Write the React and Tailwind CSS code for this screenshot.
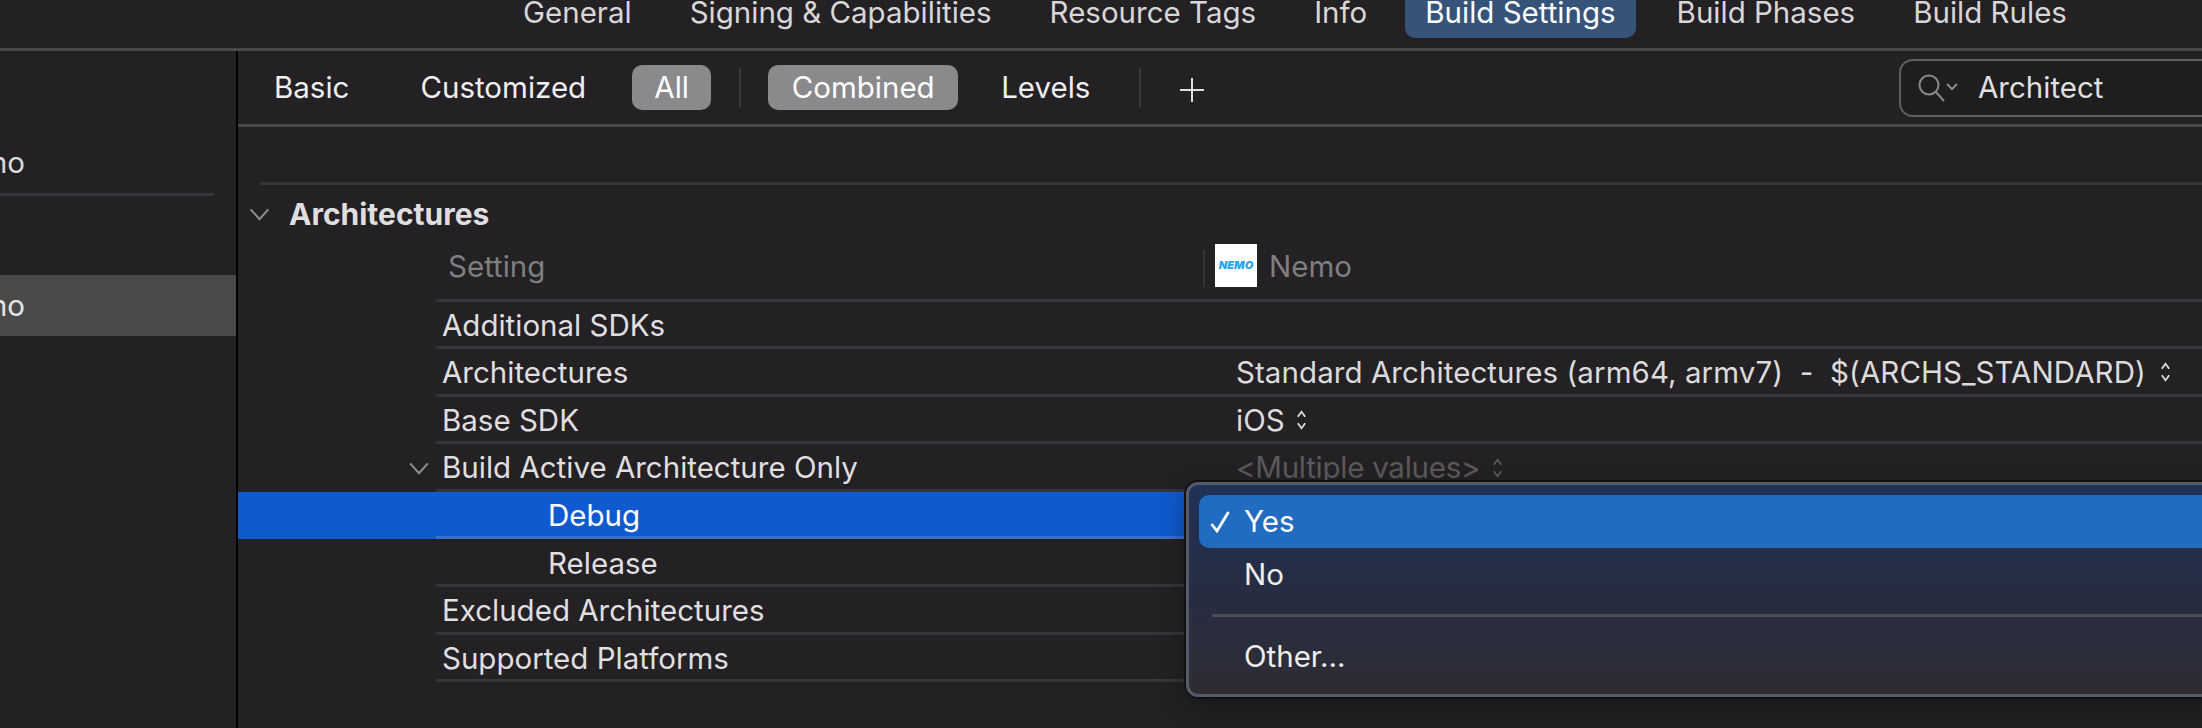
const font = { fontFamily: "Inter, 'Liberation Sans', sans-serif" };

function Chevron({ className }) {
  return (
    <svg viewBox="0 0 22 14" className={className} fill="none" stroke="currentColor" strokeWidth="2.2">
      <path d="M1.5 1.5 L11 12 L20.5 1.5" />
    </svg>
  );
}

function UpDown({ className }) {
  return (
    <svg viewBox="0 0 12 24" className={className} fill="none" stroke="currentColor" strokeWidth="2">
      <path d="M2 8.5 L6 3 L10 8.5" />
      <path d="M2 15.5 L6 21 L10 15.5" />
    </svg>
  );
}

function Row({ label, nested, chevron, selected, children }) {
  return (
    <div className={`flex h-[47.6px] ${selected ? "bg-[#0f5acf]" : ""}`}>
      <div className="flex w-[198px] items-center justify-end pr-[6px] pt-[1px]">
        {chevron && <Chevron className="h-[13px] w-[22px] text-[#8d8c8e]" />}
      </div>
      <div className={`flex flex-1 items-center border-b-[3px] pt-[2px] ${selected ? "border-[#3a6fd0]" : "border-[#38353a]"}`}>
        <div className={`w-[800px] ${nested ? "pl-[112px]" : "pl-[6px]"} ${selected ? "text-white" : "text-[#e0dfe0]"}`}>
          {label}
        </div>
        {children}
      </div>
    </div>
  );
}

function Value({ text, dim, gap }) {
  return (
    <div className={`flex items-center ${gap} ${dim ? "text-[#5c5a5d] tracking-[-0.25px]" : "text-[#dcdbdc] tracking-[0.07px]"}`}>
      <span className="whitespace-pre">{text}</span>
      <UpDown className="h-[22px] w-[11px]" />
    </div>
  );
}

function TopTab({ children, active }) {
  return (
    <div className={`flex h-[38px] items-center rounded-b-[10px] px-[20px] ${active ? "bg-[#36537a] text-white" : "text-[#d8d7d8]"}`}>
      <span className="-mt-[12px] leading-none">{children}</span>
    </div>
  );
}

export default function App() {
  return (
    <div style={font} className="relative flex h-[728px] w-[2202px] flex-col overflow-hidden bg-[#242125] text-[29.5px]">
      {/* project tabs */}
      <div className="flex h-[51px] shrink-0 gap-[18px] whitespace-nowrap border-b-[3px] border-[#4a484a] pl-[503px]">
        <TopTab>General</TopTab>
        <TopTab>Signing &amp; Capabilities</TopTab>
        <TopTab>Resource Tags</TopTab>
        <TopTab>Info</TopTab>
        <TopTab active>Build Settings</TopTab>
        <div className="ml-[3px]">
          <TopTab>Build Phases</TopTab>
        </div>
        <TopTab>Build Rules</TopTab>
      </div>

      <div className="flex flex-1">
        {/* targets sidebar */}
        <div className="w-[238px] shrink-0 overflow-hidden border-r-2 border-black pt-[86px]">
          <div className="-ml-[58px] flex h-[50px] items-center text-[#dcdbdc]">Nemo</div>
          <div className="mt-[6px] h-[3px] w-[214px] bg-[#38353a]" />
          <div className="mt-[79px] flex h-[61px] items-center bg-[#4a4a4a] text-[#e6e5e6]">
            <span className="-ml-[58px]">Nemo</span>
          </div>
        </div>

        <div className="flex min-w-0 flex-1 flex-col">
          {/* filter bar */}
          <div className="flex h-[76px] shrink-0 items-center border-b-[3px] border-[#4a484a] whitespace-nowrap text-[#f0eff0]">
            <span className="ml-[36px]">Basic</span>
            <span className="ml-[71px]">Customized</span>
            <span className="ml-[46px] flex h-[45px] w-[79px] items-center justify-center rounded-[10px] bg-[#8a898c] text-white">All</span>
            <span className="ml-[28px] h-[39px] w-[2px] bg-[#3a383b]" />
            <span className="ml-[27px] flex h-[45px] w-[190px] items-center justify-center rounded-[10px] bg-[#8a898c] text-white">Combined</span>
            <span className="ml-[43px]">Levels</span>
            <span className="ml-[49px] h-[39px] w-[2px] bg-[#3a383b]" />
            <svg viewBox="0 0 26 26" className="ml-[38px] mt-[4px] h-[26px] w-[26px]" stroke="#e0dfe0" strokeWidth="2">
              <path d="M13 1V25M1 13H25" />
            </svg>
            <div className="ml-auto -mr-[20px] flex h-[58px] w-[323px] items-center rounded-l-[14px] border-2 border-[#5f5e60] bg-[#1e1e1e] pl-[17px] text-[#e0dfe0]">
              <svg viewBox="0 0 42 28" className="h-[28px] w-[42px] text-[#8a898c]" fill="none" stroke="currentColor" strokeWidth="2">
                <circle cx="11" cy="11" r="9.5" />
                <path d="M18 18L26 27" />
                <path d="M29 10L34 15L39 10" />
              </svg>
              <span className="ml-[18px]">Architect</span>
            </div>
          </div>

          <div className="ml-[22px] mt-[55px] h-[3px] bg-[#38353a]" />

          {/* section */}
          <div className="flex h-[56px] items-center pl-[11px] pt-[2px]">
            <Chevron className="h-[13px] w-[21px] text-[#8d8c8e]" />
            <span className="ml-[19px] text-[30px] font-bold text-[#e0dfe0]">Architectures</span>
          </div>
          <div className="flex h-[60.5px]">
            <div className="w-[198px]" />
            <div className="flex flex-1 items-center border-b-[3px] border-[#38353a] pb-[8px] text-[#7f7e80]">
              <span className="w-[767px] pl-[12px]">Setting</span>
              <span className="mt-[6px] h-[37px] w-[2px] bg-[#38353a]" />
              <div className="ml-[10px] flex h-[43px] w-[42px] items-center justify-center bg-white">
                <span className="text-[11px] font-black italic leading-none text-[#2aa5f0]">NEMO</span>
              </div>
              <span className="ml-[12px]">Nemo</span>
            </div>
          </div>

          <Row label="Additional SDKs" />
          <Row label="Architectures">
            <Value text="Standard Architectures (arm64, armv7)  -  $(ARCHS_STANDARD)" gap="gap-[14px]" />
          </Row>
          <Row label="Base SDK">
            <Value text="iOS" gap="gap-[11px]" />
          </Row>
          <Row label="Build Active Architecture Only" chevron>
            <Value text="<Multiple values>" dim gap="gap-[12px]" />
          </Row>
          <Row label="Debug" nested selected />
          <Row label="Release" nested />
          <Row label="Excluded Architectures" />
          <Row label="Supported Platforms" />
        </div>
      </div>

      {/* popup menu */}
      <div className="absolute left-[1186px] top-[482px] h-[215px] w-[1030px] rounded-[12px] border-[3px] border-[#555a6a] bg-gradient-to-b from-[#1f3157] via-[#262d42] to-[#2d2c34] pl-[10px] pt-[10px] text-[#eeeeee] shadow-[0_0_0_2px_#111,0_8px_28px_rgba(0,0,0,0.4)]">
        <div className="flex h-[53px] items-center rounded-l-[10px] bg-[#216cc0] text-white">
          <div className="flex w-[45px] justify-start pl-[11px]">
            <svg viewBox="0 0 20 22" className="h-[22px] w-[20px]" fill="none" stroke="currentColor" strokeWidth="2.8">
              <path d="M1.5 13 L7 20 L18.5 1" />
            </svg>
          </div>
          <span>Yes</span>
        </div>
        <div className="flex h-[53px] items-center pl-[45px]">No</div>
        <div className="ml-[13px] mt-[13px] h-[3px] bg-[#4b4b55]" />
        <div className="mt-[13px] flex h-[53px] items-center pl-[45px]">Other...</div>
      </div>
    </div>
  );
}
